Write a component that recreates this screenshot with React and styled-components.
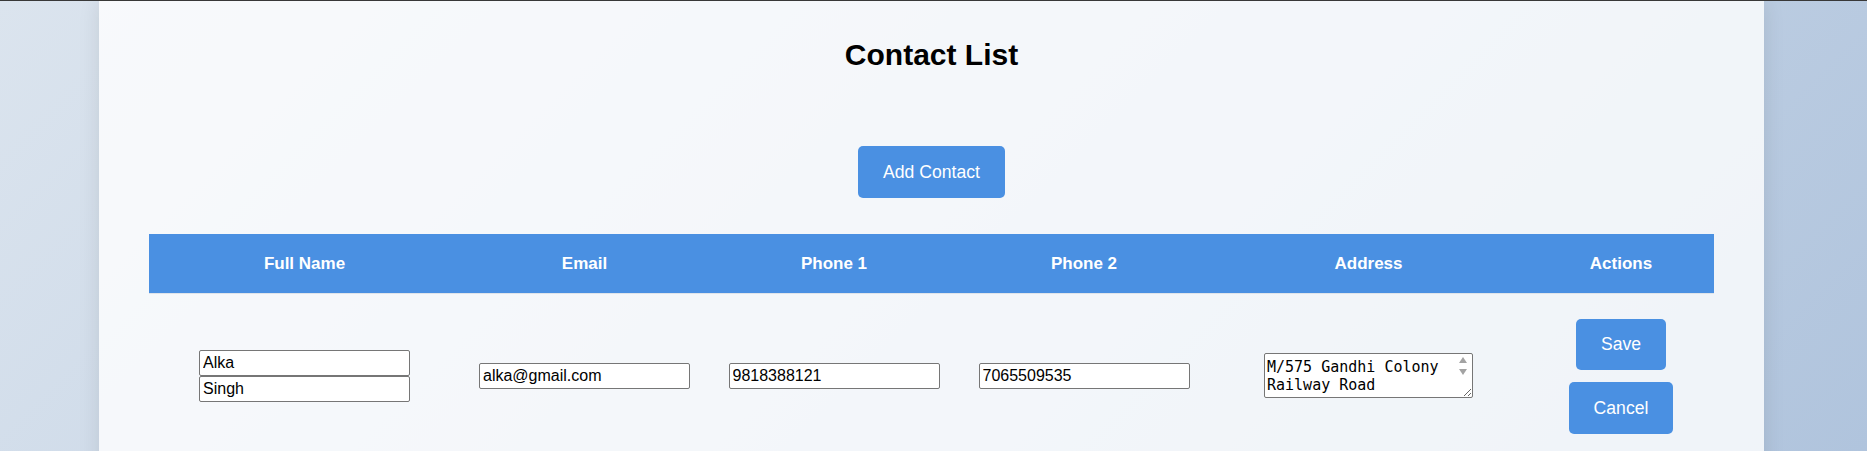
import React from "react";
import styled, { createGlobalStyle } from "styled-components";

const GlobalStyle = createGlobalStyle`
  html, body {
    margin: 0;
    padding: 0;
  }
  body {
    border-top: 1px solid #383838;
    min-height: 100vh;
    font-family: "Liberation Sans", Arial, sans-serif;
    background: linear-gradient(135deg, #dbe4ee 0%, #b0c4dd 100%) fixed;
  }
`;

const Container = styled.div`
  box-sizing: border-box;
  width: 1665px;
  margin: 0 calc(50% - 830.5px) 0 calc(50% - 834.5px);
  padding: 20px 50px 30px;
  background: rgba(255, 255, 255, 0.8);
  box-shadow: 0 0 20px rgba(0, 0, 0, 0.1);
  text-align: center;
`;

const Title = styled.h1`
  margin: 16px 0 74px;
  font-size: 30px;
  line-height: 35px;
  font-weight: bold;
  color: #000;
`;

const Button = styled.button`
  background: #4a90e2;
  color: #fff;
  border: none;
  border-radius: 5px;
  font-family: "Liberation Sans", Arial, sans-serif;
  font-size: 17.6px;
  line-height: 20px;
  padding: 15.75px 25px;
  cursor: pointer;
`;

const Table = styled.table`
  width: 100%;
  margin-top: 36px;
  border-collapse: collapse;
  table-layout: fixed;
`;

const Col = styled.col`
  width: ${(p) => p.$width}px;
`;

const HeadCell = styled.th`
  background: #4a90e2;
  color: #fff;
  font-size: 17px;
  font-weight: bold;
  line-height: 19px;
  padding: 20px 10px;
  border-bottom: 1px solid #dfe4ea;
  text-align: center;
`;

const Cell = styled.td`
  padding: 25px 10px;
  text-align: center;
  vertical-align: middle;
`;

const Input = styled.input`
  box-sizing: border-box;
  display: ${(p) => (p.$stacked ? "block" : "inline-block")};
  margin: ${(p) => (p.$stacked ? "0 auto" : "0")};
  width: 211px;
  height: 26px;
  padding: 3px 3px;
  border: 1px solid #767676;
  border-radius: 2px;
  background: #fff;
  color: #000;
  font-family: "Liberation Sans", Arial, sans-serif;
  font-size: 16px;
`;

const AddressWrap = styled.span`
  position: relative;
  display: inline-block;
  vertical-align: middle;
  margin-top: -2px;
`;

const AddressBox = styled.textarea`
  display: block;
  box-sizing: border-box;
  width: 209px;
  height: 45px;
  padding: 4px 17px 2px 2px;
  border: 1px solid #767676;
  border-radius: 2px;
  background: #fff;
  color: #000;
  font-family: "DejaVu Sans Mono", "Liberation Mono", monospace;
  font-size: 15px;
  line-height: 18px;
  overflow: hidden;
`;

/* the disabled scrollbar arrows drawn over the textarea's right edge */
const ScrollArrows = styled.span`
  position: absolute;
  top: 4px;
  right: 6px;
  display: flex;
  flex-direction: column;
  gap: 6px;
  pointer-events: none;
`;

const Arrow = styled.span`
  width: 0;
  height: 0;
  border-left: 4px solid transparent;
  border-right: 4px solid transparent;
  ${(p) =>
    p.$up
      ? "border-bottom: 6px solid #a3a3a3;"
      : "border-top: 6px solid #a3a3a3;"}
`;

const ActionStack = styled.div`
  display: flex;
  flex-direction: column;
  align-items: center;
  gap: 12px;
`;

const columns = [
  { label: "Full Name", width: 311 },
  { label: "Email", width: 249 },
  { label: "Phone 1", width: 250 },
  { label: "Phone 2", width: 250 },
  { label: "Address", width: 319 },
  { label: "Actions", width: 186 },
];

const contact = {
  firstName: "Alka",
  lastName: "Singh",
  email: "alka@gmail.com",
  phone1: "9818388121",
  phone2: "7065509535",
  address: "M/575 Gandhi Colony Railway Road",
};

export default function App() {
  return (
    <>
      <GlobalStyle />
      <Container>
        <Title>Contact List</Title>
        <Button>Add Contact</Button>
        <Table>
          <colgroup>
            {columns.map((c) => (
              <Col key={c.label} $width={c.width} />
            ))}
          </colgroup>
          <thead>
            <tr>
              {columns.map((c) => (
                <HeadCell key={c.label}>{c.label}</HeadCell>
              ))}
            </tr>
          </thead>
          <tbody>
            <tr>
              <Cell>
                <Input $stacked defaultValue={contact.firstName} />
                <Input $stacked defaultValue={contact.lastName} />
              </Cell>
              <Cell>
                <Input defaultValue={contact.email} />
              </Cell>
              <Cell>
                <Input defaultValue={contact.phone1} />
              </Cell>
              <Cell>
                <Input defaultValue={contact.phone2} />
              </Cell>
              <Cell>
                <AddressWrap>
                  <AddressBox rows={2} defaultValue={contact.address} />
                  <ScrollArrows>
                    <Arrow $up />
                    <Arrow />
                  </ScrollArrows>
                </AddressWrap>
              </Cell>
              <Cell>
                <ActionStack>
                  <Button>Save</Button>
                  <Button>Cancel</Button>
                </ActionStack>
              </Cell>
            </tr>
          </tbody>
        </Table>
      </Container>
    </>
  );
}
